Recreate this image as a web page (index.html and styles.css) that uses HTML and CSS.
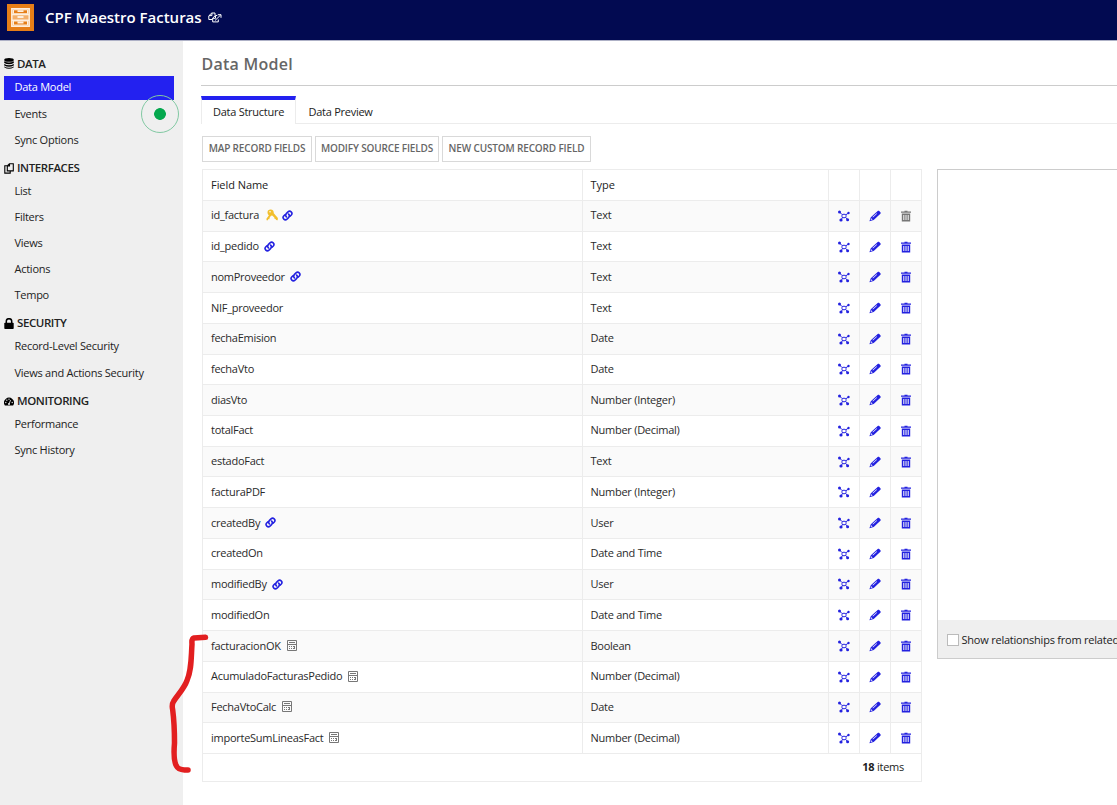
FILE: index.html
```html
<!DOCTYPE html>
<html lang="es">
<head>
<meta charset="utf-8">
<title>CPF Maestro Facturas</title>
<link rel="stylesheet" href="styles.css">
</head>
<body>
<svg class="defs" aria-hidden="true">
  <symbol id="link" viewBox="0 0 11 11"><g fill="none" stroke="currentColor" stroke-width="1.600" stroke-linecap="round"><path d="M4.400 6.900C3.200 5.700 3.500 4.500 4.500 3.400L6 1.900C8.200 0 11.200 2.700 9.300 5L8.100 6.100"/><path d="M6.600 4.100C7.800 5.300 7.500 6.500 6.500 7.600L5 9.100C2.800 11-.2 8.300 1.700 6L2.900 4.900"/></g></symbol>
  <symbol id="key" viewBox="0 0 12 12"><path fill="currentColor" fill-rule="evenodd" d="M1.500 3.200C1.500 1.300 2.900.3 4.700.4 6.700.5 8 2 7.800 4.200L11.900 9 11.700 11.200 9.900 11.100 9.700 9.900 8.500 9.700 8.300 8.500 6.200 6.500 5 6.800 3.700 8.500 3.300 10.200 2.300 10 2 11.200.6 11.300.4 9.800 2.900 6.300C2 5.600 1.500 4.600 1.500 3.200ZM4 1.900a.8.8 0 1 0 .1 1.600.8.8 0 0 0-.1-1.600Z"/></symbol>
  <symbol id="calc" viewBox="0 0 10 11"><path fill="none" stroke="currentColor" d="M.5.500h9v10h-9Z"/><path fill="currentColor" d="M1 4h8v1H1ZM2 2h6v1H2ZM2 6h1v1H2ZM4 6h1v1H4ZM2 8h1v1H2ZM4 8h1v1H4ZM6 6h2v3H7V7H6ZM6 8h1v1H6Z"/></symbol>
  <symbol id="graph" viewBox="0 0 12 12"><g fill="none" stroke="currentColor"><path d="M1.500 2 4 4.500M10.500 3 8 4.700M3 10 4.500 7.500M9.500 9.500 7.800 7.500"/><rect x="4" y="4.300" width="4" height="3.400" rx="1"/></g><g fill="currentColor"><circle cx="1.500" cy="2" r="1.500"/><circle cx="10.500" cy="3" r="1.200"/><circle cx="3" cy="10" r="1.600"/><circle cx="9.600" cy="9.800" r="1.500"/></g></symbol>
  <symbol id="pencil" viewBox="0 0 12 12"><path fill="currentColor" fill-rule="evenodd" d="M8.700 1.100c.5-.5 1-.5 1.500 0l1.200 1.200c.5.500.5 1 0 1.500L4.700 9.900.4 11.200 1.800 7.200ZM2.300 8.200 1.600 10.100 3.600 9.600ZM3.900 7.400 8 3.700 7.600 3.300 3.500 7Z"/></symbol>
  <symbol id="trash" viewBox="0 0 10 12"><path fill="currentColor" d="M3.500.8h3v.8H10v1.200H0V1.600h3.500Z"/><path fill="currentColor" fill-rule="evenodd" d="M.8 3.500h8.400V11.500H.8ZM2.300 4.900v5.200h1V4.900ZM4.500 4.900v5.200h1V4.900ZM6.700 4.900v5.200h1V4.900Z"/></symbol>
</svg>

<header class="topbar">
  <svg class="logo" viewBox="0 0 27 27"><rect width="27" height="27" fill="#e67e17"/><g fill="none" stroke="#fdeedd" stroke-width="1.500"><path fill="#f3b06c" d="M4.800 4.800h17.400v17.400H4.800Z"/><path fill="#e67e17" d="M6.500 5.800h14v4h-14ZM6.500 17h14v4h-14Z" stroke-width="1"/><path d="M4.800 10.500h17.400M4.800 16.300h17.400"/><path d="M10.500 7.200h6M10.500 13h6M10.500 18.500h6" stroke-width="1.800"/></g></svg>
  <h1 class="app-title">CPF Maestro Facturas</h1>
  <svg class="copy-link" viewBox="0 0 14 11"><path fill="none" stroke="#fff" stroke-width="1" d="M3.800 1H7v2.500M3.800 1 .8 3.800v3.700h3.500M3.900 1v2.600H1M7.500 3.500 4.700 6v3.900h5.600V7.500M7.400 3.500h1.800M4.700 6.300h2.800V4M7 8.500 12.600 3M9.800 2.700h3.200v3.100"/></svg>
</header>

<div class="shell">
  <nav class="sidebar">
    <h3 class="group first"><svg class="gicon" viewBox="0 0 10 11"><g><ellipse cx="5" cy="1.900" rx="4.800" ry="1.900"/><path d="M.2 3.200Q5 6 9.800 3.200V5Q5 7.500.2 5ZM.2 5.900Q5 8.500 9.800 5.900v1.600Q5 10 .2 7.500ZM.2 8.400Q5 11 9.800 8.400v.8Q5 12.500.2 9.200Z"/></g></svg>DATA</h3>
    <a class="item active">Data Model</a>
    <a class="item">Events<span class="beacon"></span></a>
    <a class="item">Sync Options</a>
    <h3 class="group"><svg class="gicon" viewBox="0 0 10 11"><path fill="none" stroke="#000" stroke-width="1.100" d="M3 2.800H.8v7.300h5.400V8.200M3.300 2.800 5.400.7h3.900v7.200H3.300ZM5.500.7v2.200H3.400"/></svg>INTERFACES</h3>
    <a class="item">List</a>
    <a class="item">Filters</a>
    <a class="item">Views</a>
    <a class="item">Actions</a>
    <a class="item">Tempo</a>
    <h3 class="group"><svg class="gicon" viewBox="0 0 10 11"><rect x=".3" y="4.700" width="9.400" height="6.300" rx=".8"/><path fill="none" stroke="#000" stroke-width="1.500" d="M2.300 5V3.200a2.700 2.500 0 0 1 5.400 0V5"/></svg>SECURITY</h3>
    <a class="item">Record-Level Security</a>
    <a class="item late">Views and Actions Security</a>
    <h3 class="group"><svg class="gicon" viewBox="0 0 10 11"><path d="M.9 9.500A5 5 0 1 1 9.100 9.500Z"/><g fill="#efefef"><circle cx="1.800" cy="6.500" r=".65"/><circle cx="2.800" cy="4.200" r=".65"/><circle cx="5" cy="3.200" r=".65"/><circle cx="8.200" cy="6.500" r=".65"/><circle cx="5" cy="8" r="1"/></g><path stroke="#efefef" stroke-width=".8" d="M5 8 6.600 4"/></svg>MONITORING</h3>
    <a class="item">Performance</a>
    <a class="item">Sync History</a>
  </nav>

  <main class="content">
    <h2 class="page-title">Data Model</h2>
    <div class="tabs"><span class="tab selected">Data Structure</span><span class="tab">Data Preview</span></div>
    <div class="buttons"><button class="b1">MAP RECORD FIELDS</button><button class="b2">MODIFY SOURCE FIELDS</button><button class="b3">NEW CUSTOM RECORD FIELD</button></div>
    <div class="columns">
      <div class="grid-box">
        <div class="row head"><span>Field Name</span><span>Type</span><i></i><i></i><i></i></div>
        <div class="row"><span>id_factura<svg class="key"><use href="#key"/></svg><svg class="link tight"><use href="#link"/></svg></span><span>Text</span><i><svg><use href="#graph"/></svg></i><i><svg><use href="#pencil"/></svg></i><i class="off"><svg class="bin"><use href="#trash"/></svg></i></div>
        <div class="row"><span>id_pedido<svg class="link"><use href="#link"/></svg></span><span>Text</span><i><svg><use href="#graph"/></svg></i><i><svg><use href="#pencil"/></svg></i><i><svg class="bin"><use href="#trash"/></svg></i></div>
        <div class="row"><span>nomProveedor<svg class="link"><use href="#link"/></svg></span><span>Text</span><i><svg><use href="#graph"/></svg></i><i><svg><use href="#pencil"/></svg></i><i><svg class="bin"><use href="#trash"/></svg></i></div>
        <div class="row"><span>NIF_proveedor</span><span>Text</span><i><svg><use href="#graph"/></svg></i><i><svg><use href="#pencil"/></svg></i><i><svg class="bin"><use href="#trash"/></svg></i></div>
        <div class="row"><span>fechaEmision</span><span>Date</span><i><svg><use href="#graph"/></svg></i><i><svg><use href="#pencil"/></svg></i><i><svg class="bin"><use href="#trash"/></svg></i></div>
        <div class="row"><span>fechaVto</span><span>Date</span><i><svg><use href="#graph"/></svg></i><i><svg><use href="#pencil"/></svg></i><i><svg class="bin"><use href="#trash"/></svg></i></div>
        <div class="row"><span>diasVto</span><span>Number (Integer)</span><i><svg><use href="#graph"/></svg></i><i><svg><use href="#pencil"/></svg></i><i><svg class="bin"><use href="#trash"/></svg></i></div>
        <div class="row"><span>totalFact</span><span>Number (Decimal)</span><i><svg><use href="#graph"/></svg></i><i><svg><use href="#pencil"/></svg></i><i><svg class="bin"><use href="#trash"/></svg></i></div>
        <div class="row"><span>estadoFact</span><span>Text</span><i><svg><use href="#graph"/></svg></i><i><svg><use href="#pencil"/></svg></i><i><svg class="bin"><use href="#trash"/></svg></i></div>
        <div class="row"><span>facturaPDF</span><span>Number (Integer)</span><i><svg><use href="#graph"/></svg></i><i><svg><use href="#pencil"/></svg></i><i><svg class="bin"><use href="#trash"/></svg></i></div>
        <div class="row"><span>createdBy<svg class="link"><use href="#link"/></svg></span><span>User</span><i><svg><use href="#graph"/></svg></i><i><svg><use href="#pencil"/></svg></i><i><svg class="bin"><use href="#trash"/></svg></i></div>
        <div class="row"><span>createdOn</span><span>Date and Time</span><i><svg><use href="#graph"/></svg></i><i><svg><use href="#pencil"/></svg></i><i><svg class="bin"><use href="#trash"/></svg></i></div>
        <div class="row"><span>modifiedBy<svg class="link"><use href="#link"/></svg></span><span>User</span><i><svg><use href="#graph"/></svg></i><i><svg><use href="#pencil"/></svg></i><i><svg class="bin"><use href="#trash"/></svg></i></div>
        <div class="row"><span>modifiedOn</span><span>Date and Time</span><i><svg><use href="#graph"/></svg></i><i><svg><use href="#pencil"/></svg></i><i><svg class="bin"><use href="#trash"/></svg></i></div>
        <div class="row"><span>facturacionOK<svg class="calc"><use href="#calc"/></svg></span><span>Boolean</span><i><svg><use href="#graph"/></svg></i><i><svg><use href="#pencil"/></svg></i><i><svg class="bin"><use href="#trash"/></svg></i></div>
        <div class="row"><span>AcumuladoFacturasPedido<svg class="calc"><use href="#calc"/></svg></span><span>Number (Decimal)</span><i><svg><use href="#graph"/></svg></i><i><svg><use href="#pencil"/></svg></i><i><svg class="bin"><use href="#trash"/></svg></i></div>
        <div class="row"><span>FechaVtoCalc<svg class="calc"><use href="#calc"/></svg></span><span>Date</span><i><svg><use href="#graph"/></svg></i><i><svg><use href="#pencil"/></svg></i><i><svg class="bin"><use href="#trash"/></svg></i></div>
        <div class="row"><span>importeSumLineasFact<svg class="calc"><use href="#calc"/></svg></span><span>Number (Decimal)</span><i><svg><use href="#graph"/></svg></i><i><svg><use href="#pencil"/></svg></i><i><svg class="bin"><use href="#trash"/></svg></i></div>
        <div class="total"><b>18</b>&nbsp;items</div>
      </div>
      <aside class="diagram">
        <div class="canvas"></div>
        <label class="option"><span class="check"></span><span>Show relationships from related</span></label>
      </aside>
    </div>
  </main>
</div>

<svg class="brace" viewBox="0 0 50 150"><path d="M40.500 12.300 29 13Q26.500 13.500 27 19C26 35 26.500 45 22 55.500C19 64 12 70.500 8.500 76.500Q6.500 79.500 7.700 85C9 95 9.500 107 9.500 118C8.500 130 9 137 11.500 141Q13 144.500 19.500 145H23"/></svg>
</body>
</html>
```

FILE: styles.css
```css
* { box-sizing: border-box; }
body {
  margin: 0;
  width: 1117px;
  height: 805px;
  overflow: hidden;
  position: relative;
  background: #fff;
  color: #222;
  font-family: "Open Sans", sans-serif;
  font-size: 11px;
  letter-spacing: -0.26px;
}
h1, h2, h3 { margin: 0; }
.defs { display: none; }

.topbar {
  height: 41px;
  display: flex;
  align-items: flex-start;
  padding: 4px 0 0 7px;
  background: #020a51;
  border-bottom: 1px solid #aeb1c6;
  color: #fff;
}
.logo { width: 27px; height: 27px; }
.app-title { margin-left: 11px; font-size: 15px; line-height: 27px; font-weight: 600; white-space: nowrap; width: 157px; letter-spacing: 0; }
.copy-link { width: 14px; height: 11px; margin: 8px 0 0 6px; }

.shell { display: flex; height: 764px; }
.sidebar { width: 183px; flex: none; background: #efefef; padding: 10px 9px 0 4px; }
.group {
  height: 25px;
  padding-top: 5px;
  display: flex;
  align-items: center;
  gap: 3px;
  font-size: 11.5px;
  line-height: 20px;
  font-weight: 600;
  letter-spacing: -0.42px;
}
.group.first { padding: 0; }
.gicon { width: 10px; height: 11px; }
.item { display: block; position: relative; height: 26px; line-height: 26px; padding-left: 10.500px; white-space: nowrap; }
.item.active { height: 24px; line-height: 22px; margin-bottom: 1px; background: #2321f0; color: #fff; }
.item.late { height: 27px; line-height: 28px; }
.beacon {
  position: absolute;
  left: 137px;
  top: -6px;
  width: 38px;
  height: 38px;
  border: 1px solid #82c9a3;
  border-radius: 50%;
  background: radial-gradient(circle, #05a84e 5.500px, transparent 6.200px);
}

.content { flex: 1; min-width: 0; padding: 0 0 0 18px; }
.page-title { height: 45px; padding: 10px 0 0 0.500px; font-size: 16px; line-height: 26px; font-weight: 600; color: #666; border-bottom: 1px solid #ccc; letter-spacing: 0.25px; }
.tabs { display: flex; margin-top: 10px; height: 28px; }
.tab { padding: 0 0 0 12.500px; line-height: 32px; border-bottom: 1px solid #ececec; flex: 1; white-space: nowrap; }
.tab.selected { flex: none; width: 95px; padding-left: 11px; line-height: 24px; border: 1px solid #ececec; border-top: 4px solid #2321f0; border-bottom: 0; }
.buttons { display: flex; gap: 3px; margin: 12px 0 0 1px; }
.buttons button { height: 26px; padding: 0 0 2px; border: 1px solid #d9d9d9; background: #fff; color: #666; font: 600 10px/22px "Open Sans", sans-serif; letter-spacing: -0.15px; white-space: nowrap; }
.b1 { width: 110px; }
.b2 { width: 124px; }
.b3 { width: 149px; }

.columns { display: flex; gap: 15px; margin: 7px 0 0 1px; }
.grid-box { width: 720px; height: 613px; flex: none; border: 1px solid #ececec; }
.row { display: grid; grid-template-columns: 380px 246px 31px 31px 30px; height: 30.720px; border-bottom: 1px solid #ececec; color: #2a2a2a; }
.row > span { display: flex; align-items: center; padding: 0 0 1.800px 8px; border-right: 1px solid #ececec; white-space: nowrap; }
.row > span + span { padding-left: 7.500px; }
.row > i { display: flex; align-items: center; justify-content: center; padding-right: 1px; border-right: 1px solid #ececec; color: #2321e0; }
.row > i:last-child { border-right: 0; }
.row > i.off { color: #777; }
.row:nth-child(even) { background: #fafafa; }
.row.head { height: 31px; font-weight: 500; color: #222; letter-spacing: -0.05px; }
.row.head > span { padding-bottom: 1px; }
.row svg { width: 12px; height: 12px; }
.row svg.bin { width: 10px; }
.row svg.link { width: 11px; height: 11px; margin: 1px 0 0 5px; color: #2321e0; }
.row svg.link.tight { margin-left: 4px; }
.row svg.key { margin-left: 7px; color: #f2bf2d; }
.row svg.calc { width: 10px; height: 11px; margin: 1px 0 0 6px; color: #777; }
.total { height: 26px; display: flex; align-items: center; justify-content: flex-end; padding: 0 17px 1px 0; }

.diagram { width: 181px; flex: none; height: 490px; border: 1px solid #ccc; border-right: 0; overflow: hidden; }
.canvas { height: 450px; }
.option { display: flex; align-items: center; gap: 2.500px; height: 38px; padding: 1px 0 0 9px; background: #efefef; white-space: nowrap; letter-spacing: -0.22px; }
.check { width: 12px; height: 12px; flex: none; border: 1px solid #bbb; background: #fff; }

.brace { position: absolute; left: 165px; top: 625px; width: 50px; height: 150px; }
.brace path { fill: none; stroke: #e21f20; stroke-width: 5.500px; stroke-linecap: round; stroke-linejoin: round; }
```
